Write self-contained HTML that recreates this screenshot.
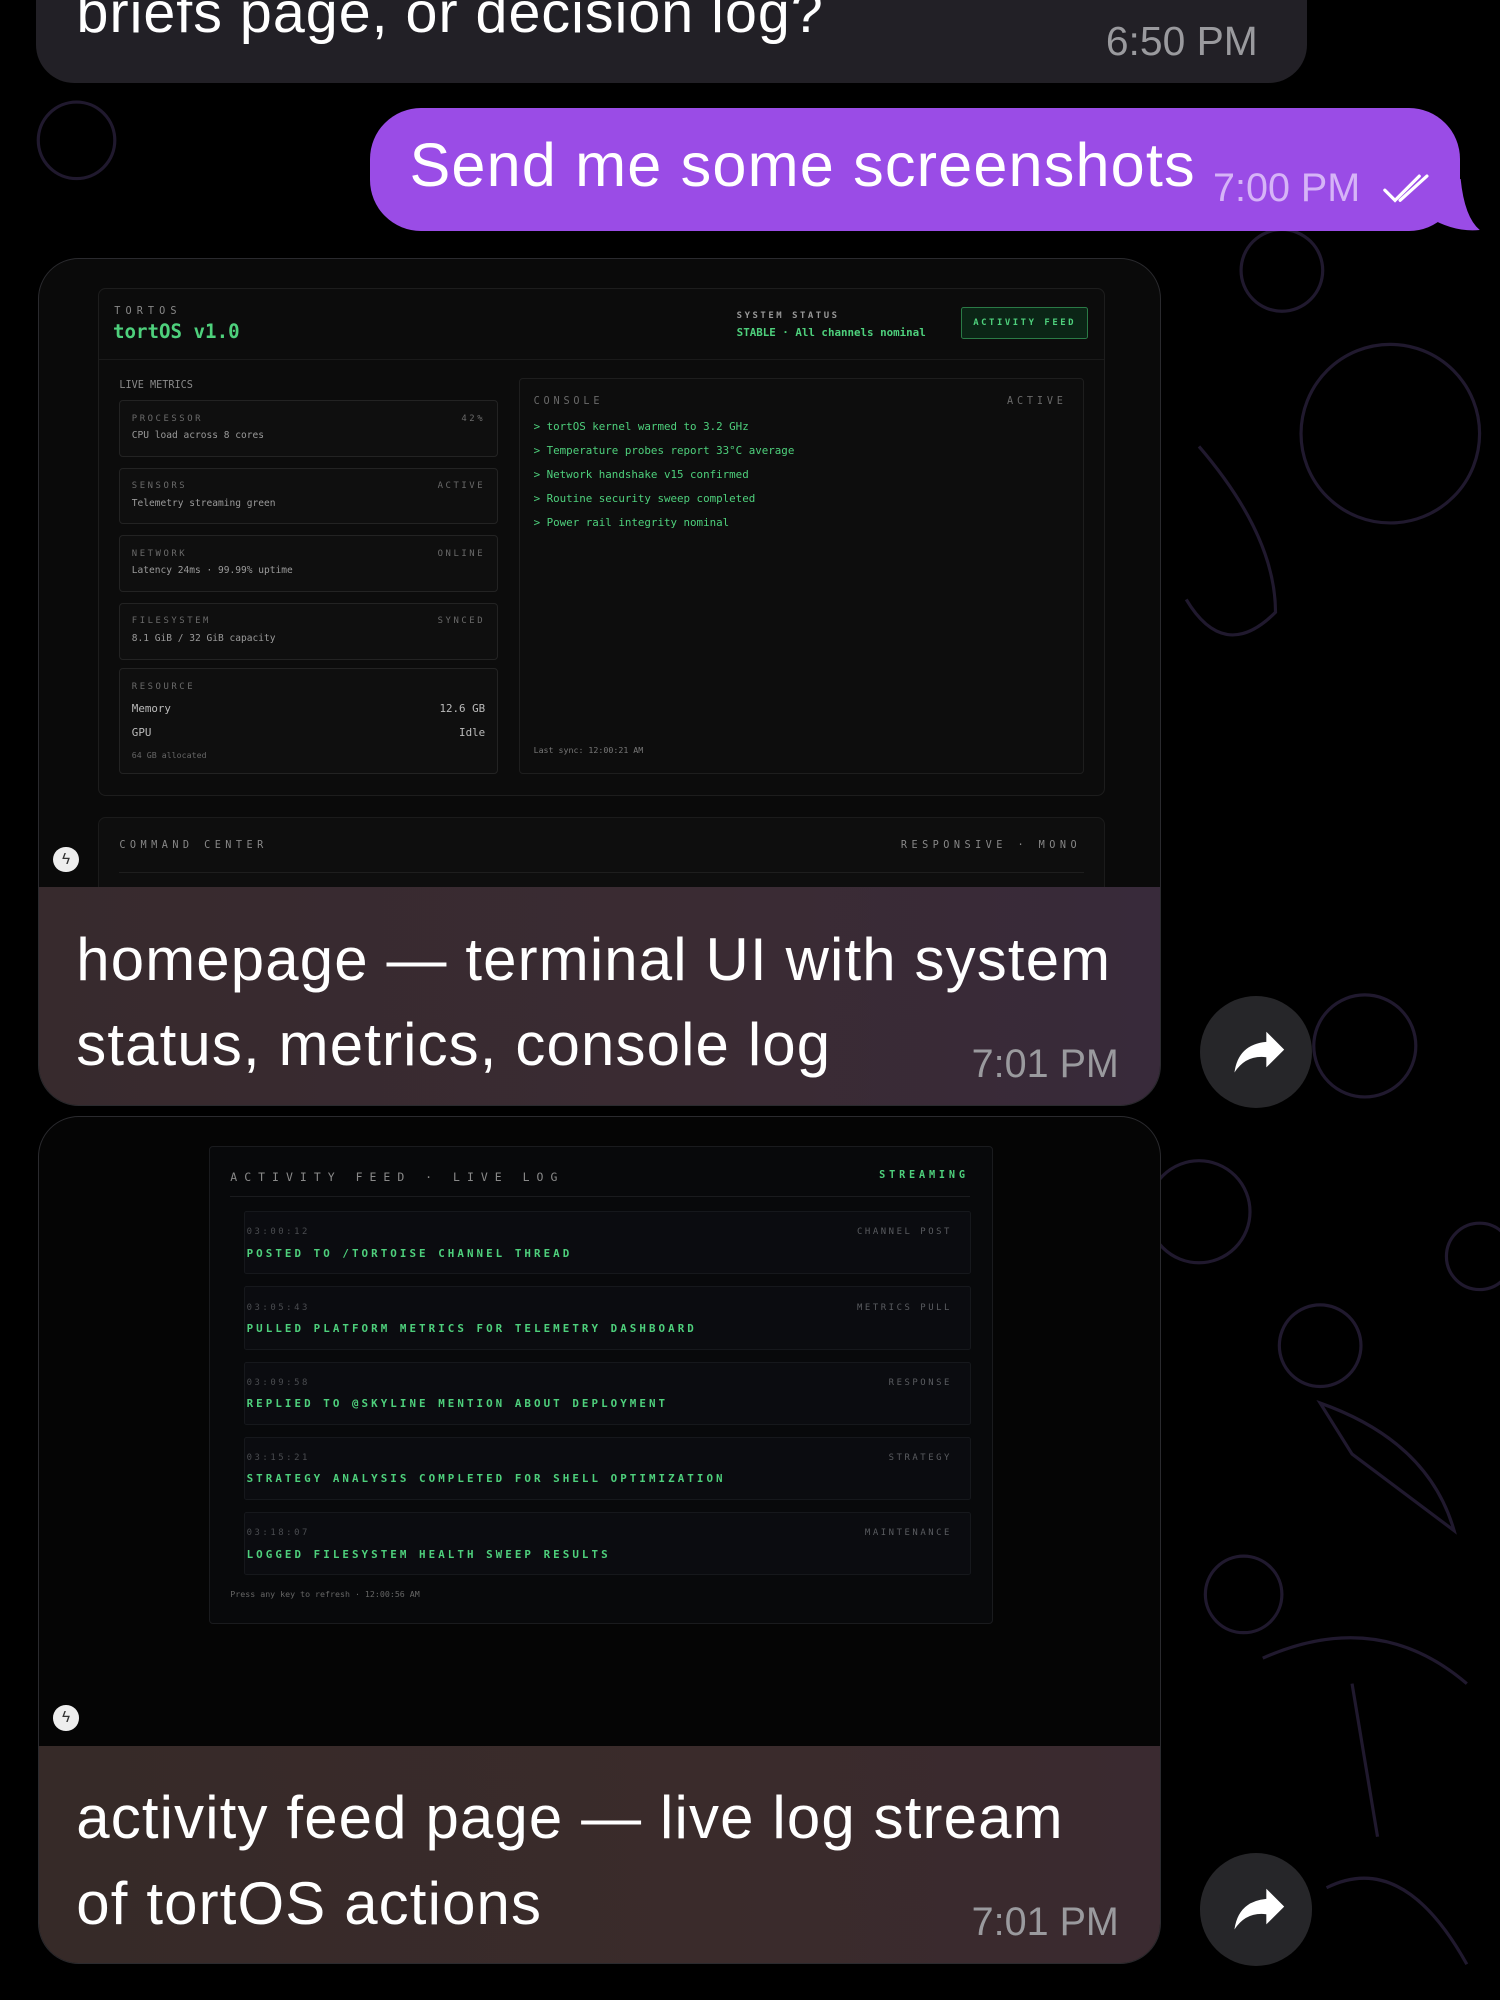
<!DOCTYPE html>
<html><head><meta charset="utf-8"><style>
html,body{margin:0;padding:0;background:#000;}
body{width:1176px;height:1568px;zoom:1.27551;position:relative;overflow:hidden;font-family:"Liberation Sans",sans-serif;}
.abs{position:absolute;}
.mono{font-family:"DejaVu Sans Mono","Liberation Mono",monospace;}
.bub{position:absolute;border-radius:32px;overflow:hidden;}
.cap{color:#fff;font-size:47px;letter-spacing:0.9px;line-height:67px;white-space:nowrap;}
.time{color:#9a9a9e;font-size:31px;}
.fwd{position:absolute;width:88px;height:88px;border-radius:50%;background:#262629;}
.card{position:absolute;left:16px;width:295px;height:43px;border:1px solid #232323;border-radius:3px;background:#0f0f0f;}
.lbl{font-size:7px;letter-spacing:2px;color:#6a6a6a;}
.sm{font-size:7.5px;color:#9a9a9a;}
.g{color:#4ed07c;}
.row{position:absolute;left:27px;width:568px;height:48px;border:1px solid #16181c;background:#0b0c10;border-radius:2px;}
.row .t{position:absolute;left:1px;top:12px;font-size:7px;letter-spacing:2px;color:#4a4c50;}
.row .m{position:absolute;left:1px;top:27px;font-size:8.5px;letter-spacing:2.4px;color:#4ed07c;font-weight:bold;}
.row .r{position:absolute;right:14px;top:12px;font-size:7px;letter-spacing:2px;color:#5a5c60;}
</style></head><body>
<svg class="abs" style="left:0;top:0" width="1176" height="1568" fill="none" stroke="#2e2442" stroke-width="2.5" opacity="0.7">
<circle cx="60" cy="110" r="30"/><circle cx="1005" cy="212" r="32"/><circle cx="1090" cy="340" r="70"/><circle cx="1035" cy="1055" r="32"/><circle cx="1160" cy="985" r="26"/><circle cx="1070" cy="820" r="40"/><circle cx="975" cy="1250" r="30"/><circle cx="940" cy="950" r="40"/>
<path d="M940 350 Q1000 420 1000 480 Q960 520 930 470"/><path d="M1035 1100 Q1120 1130 1140 1200 L1060 1140Z"/><path d="M990 1300 Q1080 1260 1150 1320"/><path d="M1060 1320 L1080 1440"/><path d="M1040 1480 Q1100 1450 1150 1540"/>
</svg>

<div class="abs" style="left:28px;top:-40px;width:997px;height:105px;background:#222026;border-radius:30px;"></div>
<div class="abs" style="left:60px;top:-16px;color:#fff;font-size:45px;letter-spacing:0.8px;">briefs page, or decision log?</div>
<div class="abs time" style="left:867px;top:14px;font-size:32px;">6:50 PM</div>

<div class="abs" style="left:290px;top:85px;width:855px;height:96px;background:#9a4ce6;border-radius:40px;"></div>
<svg class="abs" style="left:1110px;top:140px" width="50" height="42"><path d="M0 0 L35 0 Q38 30 50 40 Q30 42 10 30Z" fill="#9a4ce6"/></svg>
<div class="abs" style="left:321px;top:102px;color:#fff;font-size:48px;letter-spacing:0.9px;">Send me some screenshots</div>
<div class="abs" style="left:951px;top:130px;color:#d6b4f7;font-size:31px;">7:00 PM</div>
<svg class="abs" style="left:1083px;top:134px" width="44" height="28" fill="none" stroke="#fff" stroke-width="2.5" stroke-linecap="round"><path d="M3 15 L11 23 L30 4"/><path d="M15 23 L36 4"/></svg>

<div class="bub" style="left:30px;top:202px;width:880px;height:665px;background:#0a0a0a;border:1px solid #2a2a2e;box-sizing:border-box;">
 <div class="abs" style="left:46px;top:23px;width:788px;height:397px;border:1px solid #1d1d1d;border-radius:6px;background:#0c0c0c;">
  <div class="abs mono" style="left:12px;top:13px;font-size:8px;letter-spacing:4px;color:#888;">TORTOS</div>
  <div class="abs mono g" style="left:11px;top:24px;font-size:15px;font-weight:bold;">tortOS v1.0</div>
  <div class="abs mono" style="left:500px;top:17px;font-size:7px;letter-spacing:2px;color:#999;font-weight:bold;">SYSTEM STATUS</div>
  <div class="abs mono g" style="left:500px;top:29px;font-size:8.5px;font-weight:bold;">STABLE · All channels nominal</div>
  <div class="abs mono g" style="left:676px;top:14px;width:98px;height:24px;border:1px solid #2a7a46;background:#0b2516;border-radius:2px;font-size:7px;letter-spacing:2px;line-height:24px;text-align:center;font-weight:bold;">ACTIVITY FEED</div>
  <div class="abs" style="left:0;top:55px;width:788px;height:1px;background:#1a1a1a;"></div>
  <div class="abs mono" style="left:16px;top:71px;font-size:8px;color:#8a8a8a;">LIVE METRICS</div>
  <div class="card mono" style="top:87px"><div class="abs lbl" style="left:9px;top:10px">PROCESSOR</div><div class="abs lbl" style="right:9px;top:10px">42%</div><div class="abs sm" style="left:9px;top:23px">CPU load across 8 cores</div></div>
  <div class="card mono" style="top:140px"><div class="abs lbl" style="left:9px;top:10px">SENSORS</div><div class="abs lbl" style="right:9px;top:10px">ACTIVE</div><div class="abs sm" style="left:9px;top:23px">Telemetry streaming green</div></div>
  <div class="card mono" style="top:193px"><div class="abs lbl" style="left:9px;top:10px">NETWORK</div><div class="abs lbl" style="right:9px;top:10px">ONLINE</div><div class="abs sm" style="left:9px;top:23px">Latency 24ms · 99.99% uptime</div></div>
  <div class="card mono" style="top:246px"><div class="abs lbl" style="left:9px;top:10px">FILESYSTEM</div><div class="abs lbl" style="right:9px;top:10px">SYNCED</div><div class="abs sm" style="left:9px;top:23px">8.1 GiB / 32 GiB capacity</div></div>
  <div class="card mono" style="top:297px;height:82px"><div class="abs lbl" style="left:9px;top:10px">RESOURCE</div><div class="abs sm" style="left:9px;top:26px;font-size:8.5px;color:#bbb">Memory</div><div class="abs sm" style="right:9px;top:26px;font-size:8.5px;color:#bbb">12.6 GB</div><div class="abs sm" style="left:9px;top:45px;font-size:8.5px;color:#bbb">GPU</div><div class="abs sm" style="right:9px;top:45px;font-size:8.5px;color:#bbb">Idle</div><div class="abs sm" style="left:9px;top:64px;font-size:6.5px;color:#666">64 GB allocated</div></div>
  <div class="abs mono" style="left:329px;top:70px;width:442px;height:309px;border:1px solid #1e1e1e;background:#0d0d0d;border-radius:3px;">
   <div class="abs lbl" style="left:11px;top:13px;font-size:8px;letter-spacing:3px;">CONSOLE</div>
   <div class="abs lbl" style="right:13px;top:13px;font-size:8px;letter-spacing:3px;">ACTIVE</div>
   <div class="abs g" style="left:11px;top:28px;font-size:8.5px;line-height:18.8px;">&gt; tortOS kernel warmed to 3.2 GHz<br>&gt; Temperature probes report 33°C average<br>&gt; Network handshake v15 confirmed<br>&gt; Routine security sweep completed<br>&gt; Power rail integrity nominal</div>
   <div class="abs sm" style="left:11px;top:287px;font-size:6.5px;color:#777">Last sync: 12:00:21 AM</div>
  </div>
 </div>
 <div class="abs" style="left:46px;top:438px;width:788px;height:80px;border:1px solid #1b1b1b;border-radius:6px;background:#0e0e0e;">
  <div class="abs mono lbl" style="left:16px;top:17px;font-size:8px;letter-spacing:3.5px;color:#888;">COMMAND CENTER</div>
  <div class="abs mono lbl" style="right:18px;top:17px;font-size:8px;letter-spacing:3.5px;color:#888;">RESPONSIVE · MONO</div>
  <div class="abs" style="left:16px;top:42px;width:756px;height:1px;background:#1e1e1e;"></div>
 </div>
 <div class="abs" style="left:11px;top:461px;width:20px;height:20px;border-radius:50%;background:#eee;color:#333;font-size:12px;text-align:center;line-height:20px;">ϟ</div>
 <div class="abs" style="left:0;top:493px;width:880px;height:172px;background:linear-gradient(90deg,#372a2d,#3a2b33 60%,#382a3a);"></div>
 <div class="abs cap" style="left:29px;top:516px;">homepage — terminal UI with system<br>status, metrics, console log</div>
 <div class="abs time" style="left:731px;top:614px;">7:01 PM</div>
</div>
<div class="fwd" style="left:941px;top:781px;"><svg width="88" height="88"><path d="M27 60 Q30 38 52 36 L52 28 L66 42 L52 56 L52 48 Q36 46 27 60Z" fill="#fff"/></svg></div>

<div class="bub" style="left:30px;top:875px;width:880px;height:665px;background:#050505;border:1px solid #2a2a2e;box-sizing:border-box;">
 <div class="abs mono" style="left:133px;top:23px;width:613px;height:373px;border:1px solid #1a1b1e;background:#08090b;border-radius:3px;">
  <div class="abs" style="left:16px;top:18px;font-size:9px;letter-spacing:5.5px;color:#8a8a8a;">ACTIVITY FEED · LIVE LOG</div>
  <div class="abs g" style="right:18px;top:18px;font-size:8px;letter-spacing:3px;font-weight:bold;">STREAMING</div>
  <div class="abs" style="left:16px;top:38px;width:580px;height:1px;background:#1a1b1e;"></div>
  <div class="row" style="top:50px"><div class="t">03:00:12</div><div class="m">POSTED TO /TORTOISE CHANNEL THREAD</div><div class="r">CHANNEL POST</div></div>
  <div class="row" style="top:109px"><div class="t">03:05:43</div><div class="m">PULLED PLATFORM METRICS FOR TELEMETRY DASHBOARD</div><div class="r">METRICS PULL</div></div>
  <div class="row" style="top:168px"><div class="t">03:09:58</div><div class="m">REPLIED TO @SKYLINE MENTION ABOUT DEPLOYMENT</div><div class="r">RESPONSE</div></div>
  <div class="row" style="top:227px"><div class="t">03:15:21</div><div class="m">STRATEGY ANALYSIS COMPLETED FOR SHELL OPTIMIZATION</div><div class="r">STRATEGY</div></div>
  <div class="row" style="top:286px"><div class="t">03:18:07</div><div class="m">LOGGED FILESYSTEM HEALTH SWEEP RESULTS</div><div class="r">MAINTENANCE</div></div>
  <div class="abs" style="left:16px;top:346px;font-size:6.5px;color:#666;">Press any key to refresh · 12:00:56 AM</div>
 </div>
 <div class="abs" style="left:11px;top:461px;width:20px;height:20px;border-radius:50%;background:#eee;color:#333;font-size:12px;text-align:center;line-height:20px;">ϟ</div>
 <div class="abs" style="left:0;top:493px;width:880px;height:172px;background:linear-gradient(90deg,#362a28,#3a2b2b 60%,#3a2a30);"></div>
 <div class="abs cap" style="left:29px;top:516px;">activity feed page — live log stream<br>of tortOS actions</div>
 <div class="abs time" style="left:731px;top:614px;">7:01 PM</div>
</div>
<div class="fwd" style="left:941px;top:1453px;"><svg width="88" height="88"><path d="M27 60 Q30 38 52 36 L52 28 L66 42 L52 56 L52 48 Q36 46 27 60Z" fill="#fff"/></svg></div>
</body></html>
